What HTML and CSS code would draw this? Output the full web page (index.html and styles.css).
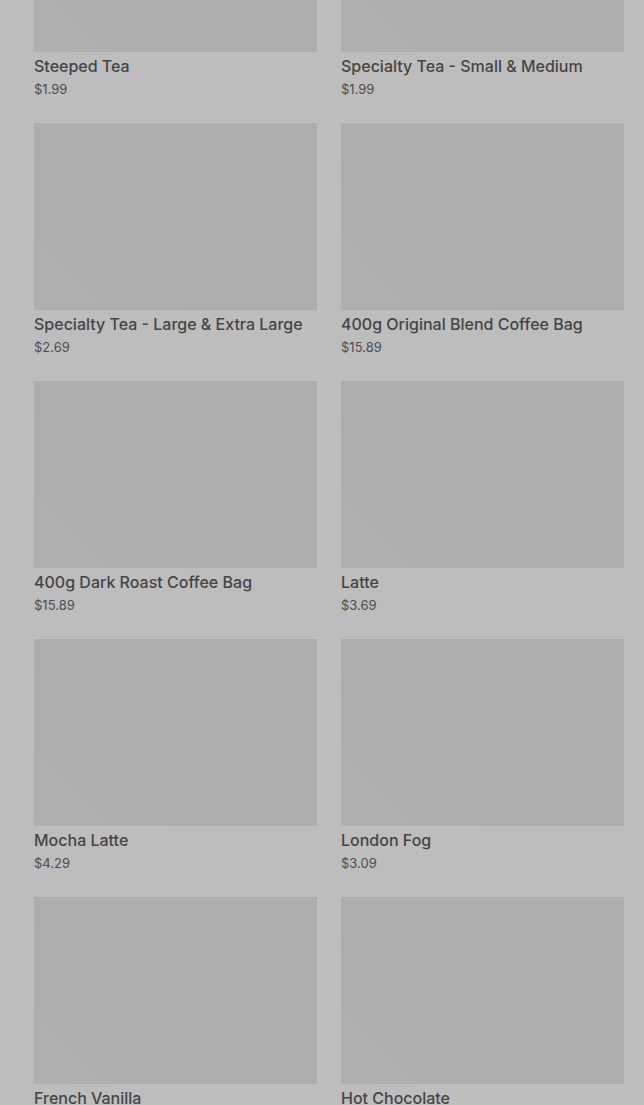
FILE: index.html
```html
<!DOCTYPE html>
<html lang="en">
<head>
  <meta charset="UTF-8" />
  <meta name="viewport" content="width=device-width, initial-scale=1" />
  <title>Menu</title>
  <link rel="stylesheet" href="styles.css">
</head>
<body>

  <div class="product-grid">
    <div class="product-card">
      <div class="product-image"></div>
      <div class="product-name">Steeped Tea</div>
      <div class="product-price">$1.99</div>
    </div>
    <div class="product-card">
      <div class="product-image"></div>
      <div class="product-name">Specialty Tea - Small &amp; Medium</div>
      <div class="product-price">$1.99</div>
    </div>
    <div class="product-card">
      <div class="product-image"></div>
      <div class="product-name">Specialty Tea - Large &amp; Extra Large</div>
      <div class="product-price">$2.69</div>
    </div>
    <div class="product-card">
      <div class="product-image"></div>
      <div class="product-name">400g Original Blend Coffee Bag</div>
      <div class="product-price">$15.89</div>
    </div>
    <div class="product-card">
      <div class="product-image"></div>
      <div class="product-name">400g Dark Roast Coffee Bag</div>
      <div class="product-price">$15.89</div>
    </div>
    <div class="product-card">
      <div class="product-image"></div>
      <div class="product-name">Latte</div>
      <div class="product-price">$3.69</div>
    </div>
    <div class="product-card">
      <div class="product-image"></div>
      <div class="product-name">Mocha Latte</div>
      <div class="product-price">$4.29</div>
    </div>
    <div class="product-card">
      <div class="product-image"></div>
      <div class="product-name">London Fog</div>
      <div class="product-price">$3.09</div>
    </div>
    <div class="product-card">
      <div class="product-image"></div>
      <div class="product-name">French Vanilla</div>
      <div class="product-price">$2.19</div>
    </div>
    <div class="product-card">
      <div class="product-image"></div>
      <div class="product-name">Hot Chocolate</div>
      <div class="product-price">$2.19</div>
    </div>
  </div>

</body>
</html>
```

FILE: styles.css
```css
:root {
  --bg: #bdbdbd;
  --img: #adadad;
  --text-title: #454545;
  --text-price: #4d4d4d;
}

html, body {
  height: 100%;
  overflow: hidden;
}

body {
  background-color: var(--bg);
  font-family: Inter, Roboto, "Liberation Sans", Arial, sans-serif;
  margin: 0;
  padding: 0 20px 0 34px;
}

/* page is scrolled: first row's image is partly above the fold */
.product-grid {
  display: grid;
  grid-template-columns: 283px 283px;
  column-gap: 24px;
  row-gap: 23px;
  margin-top: -135px;
}

.product-image {
  height: 187px;
  background-color: var(--img);
  background-image: linear-gradient(45deg, rgba(255,255,255,0.03), rgba(255,255,255,0) 40%);
}

.product-name {
  margin-top: 2px;
  line-height: 24px;
  font-size: 16px;
  font-weight: 500;
  color: var(--text-title);
  white-space: nowrap;
}

.product-price {
  line-height: 22px;
  font-size: 13px;
  color: var(--text-price);
}
```
